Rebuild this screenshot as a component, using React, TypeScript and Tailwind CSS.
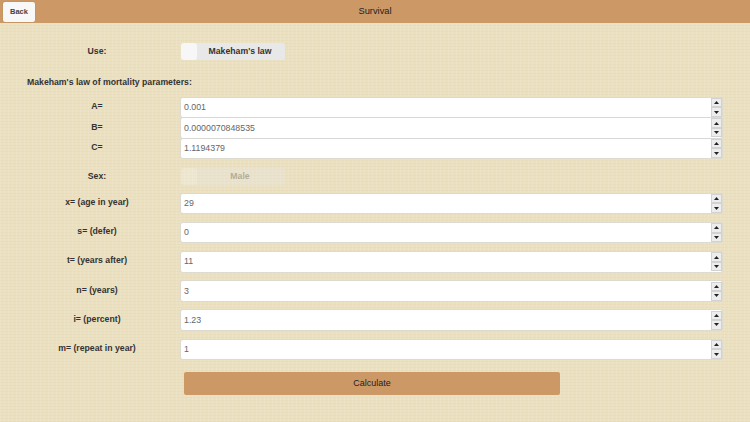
const TEXTURE =
  'bg-[#ebe0c0] bg-[repeating-linear-gradient(0deg,rgba(150,120,60,0.035)_0px,rgba(150,120,60,0.035)_1px,transparent_1px,transparent_3px),repeating-linear-gradient(90deg,rgba(255,255,255,0.1)_0px,rgba(255,255,255,0.1)_1px,transparent_1px,transparent_4px)]'

const LABEL = 'w-[181px] pl-[13px] text-center text-[8.7px] font-bold leading-none text-[#333]'

function Spinner() {
  const btn = 'flex h-[9.5px] w-[11px] items-center justify-center border border-[#d2d2d2] bg-[#ededed]'
  return (
    <div className="flex h-full w-[11px] flex-col justify-center">
      <div className={btn}>
        <svg width="5" height="3" viewBox="0 0 5 3"><path d="M2.5 0L5 3H0z" fill="#222" /></svg>
      </div>
      <div className={btn}>
        <svg width="5" height="3" viewBox="0 0 5 3"><path d="M0 0h5L2.5 3z" fill="#222" /></svg>
      </div>
    </div>
  )
}

function NumberField({ label, value, className = '' }: { label: string; value: string; className?: string }) {
  return (
    <div className={`flex items-center ${className}`}>
      <div className={`${LABEL} -mt-[2px]`}>{label}</div>
      <div className="flex h-[19.5px] w-[541px] items-center rounded-[2px] bg-white pl-[3px] shadow-[0_0_0_1px_rgba(215,215,215,0.7)]">
        <span className="flex-1 text-[8.8px] leading-none text-[#666]">{value}</span>
        <Spinner />
      </div>
    </div>
  )
}

function Toggle({ label, disabled = false }: { label: string; disabled?: boolean }) {
  return (
    <div className={`flex h-[17px] w-[104px] rounded-[3px] bg-[#e8e8e8] ${disabled ? 'opacity-30' : ''}`}>
      <div className="h-full w-[16px] rounded-[3px] bg-[#f7f7f7]" />
      <div className="flex flex-1 items-center justify-center pr-[2px] text-[8.7px] font-bold leading-none text-[#333]">
        {label}
      </div>
    </div>
  )
}

export default function App() {
  return (
    <div className={`h-[422px] w-[750px] overflow-hidden font-['Liberation_Sans',Arial,sans-serif] ${TEXTURE}`}>
      <header className="relative flex h-[23px] items-center justify-center bg-[#cc9966]">
        <button
          type="button"
          className="absolute left-[3px] top-[2px] flex h-[20px] w-[32px] items-center justify-center rounded-[2px] bg-[#f8f8f8] text-[7.5px] font-bold text-[#444] shadow-[0_0_1px_rgba(120,90,50,0.6)]"
        >
          Back
        </button>
        <span className="text-[9.3px] leading-none text-[#222]">Survival</span>
      </header>

      <main className="flex flex-col">
        <div className="mt-[20px] flex items-center">
          <div className={LABEL}>Use:</div>
          <Toggle label="Makeham's law" />
        </div>

        <p className="mt-[18px] pl-[27px] text-[8.7px] font-bold leading-none text-[#333]">
          Makeham's law of mortality parameters:
        </p>

        <NumberField label="A=" value="0.001" className="mt-[11px]" />
        <NumberField label="B=" value="0.0000070848535" className="mt-[1px]" />
        <NumberField label="C=" value="1.1194379" className="mt-[1px]" />

        <div className="mt-[9.5px] flex items-center">
          <div className={LABEL}>Sex:</div>
          <Toggle label="Male" disabled />
        </div>

        <NumberField label="x= (age in year)" value="29" className="mt-[9px]" />
        <NumberField label="s= (defer)" value="0" className="mt-[9.7px]" />
        <NumberField label="t= (years after)" value="11" className="mt-[9.7px]" />
        <NumberField label="n= (years)" value="3" className="mt-[9.7px]" />
        <NumberField label="i= (percent)" value="1.23" className="mt-[9.7px]" />
        <NumberField label="m= (repeat in year)" value="1" className="mt-[9.7px]" />

        <div className="mt-[13px] pl-[184px]">
          <button
            type="button"
            className="flex h-[23px] w-[376px] items-center justify-center rounded-[2px] bg-[#cc9966] text-[9px] leading-none text-[#222]"
          >
            Calculate
          </button>
        </div>
      </main>
    </div>
  )
}
